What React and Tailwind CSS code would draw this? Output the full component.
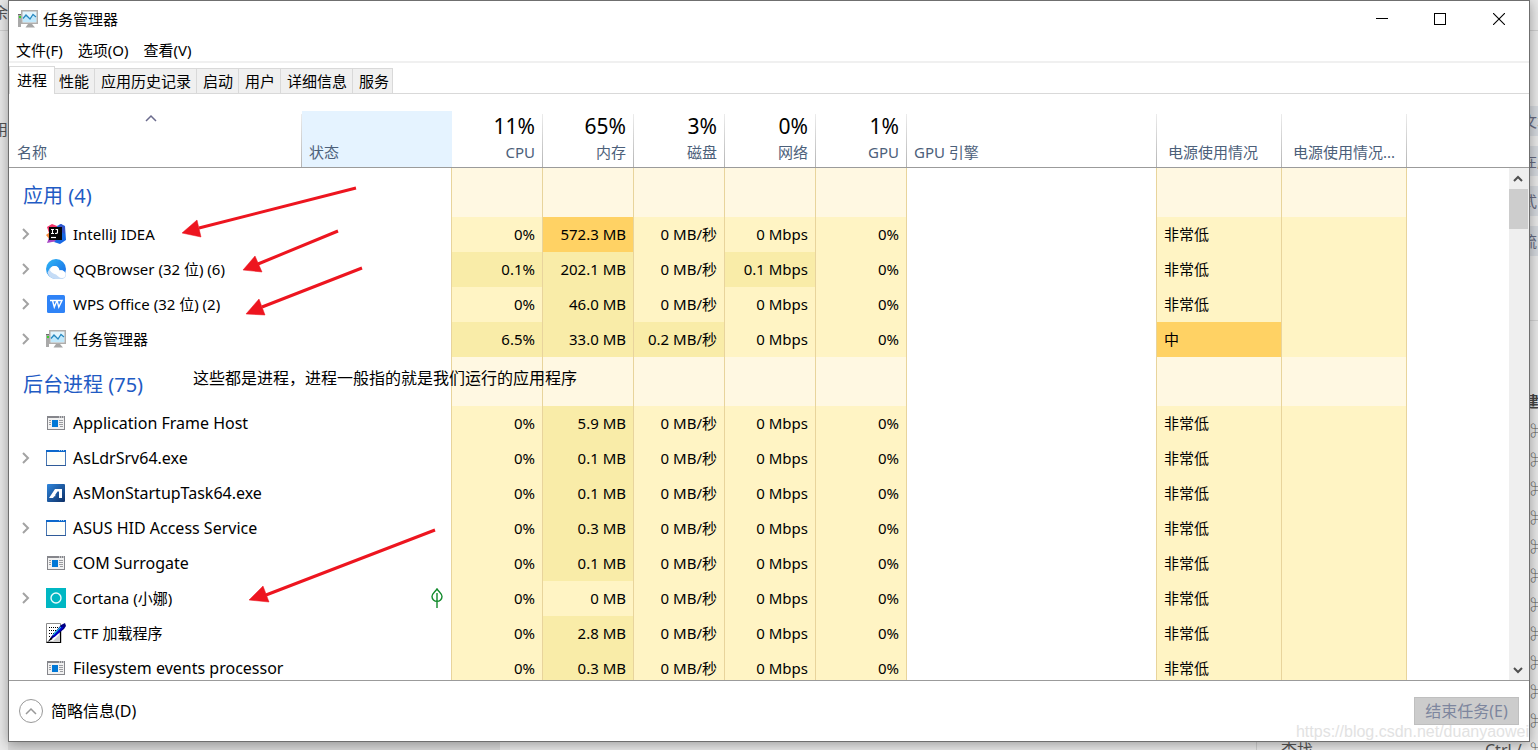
import { useState } from 'react';

const groups = [
  {
    title: '应用 (4)',
    rows: [
      { name: 'IntelliJ IDEA', icon: IdeaIcon, expand: true, cpu: '0%', mem: '572.3 MB', memLevel: 'high', disk: '0 MB/秒', net: '0 Mbps' },
      { name: 'QQBrowser (32 位) (6)', icon: BrowserIcon, expand: true, cpu: '0.1%', cpuLevel: 'mid', mem: '202.1 MB', disk: '0 MB/秒', net: '0.1 Mbps', netLevel: 'mid' },
      { name: 'WPS Office (32 位) (2)', icon: WpsIcon, expand: true, cpu: '0%', mem: '46.0 MB', disk: '0 MB/秒', net: '0 Mbps' },
      { name: '任务管理器', icon: TaskIcon, expand: true, cpu: '6.5%', cpuLevel: 'mid', mem: '33.0 MB', disk: '0.2 MB/秒', diskLevel: 'mid', net: '0 Mbps', power: '中', powerLevel: 'high' },
    ],
  },
  {
    title: '后台进程 (75)',
    large: true,
    rows: [
      { name: 'Application Frame Host', icon: HostIcon, cpu: '0%', mem: '5.9 MB', disk: '0 MB/秒', net: '0 Mbps' },
      { name: 'AsLdrSrv64.exe', icon: WindowIcon, expand: true, cpu: '0%', mem: '0.1 MB', disk: '0 MB/秒', net: '0 Mbps' },
      { name: 'AsMonStartupTask64.exe', icon: AsusIcon, cpu: '0%', mem: '0.1 MB', disk: '0 MB/秒', net: '0 Mbps' },
      { name: 'ASUS HID Access Service', icon: WindowIcon, expand: true, cpu: '0%', mem: '0.3 MB', disk: '0 MB/秒', net: '0 Mbps' },
      { name: 'COM Surrogate', icon: HostIcon, cpu: '0%', mem: '0.1 MB', disk: '0 MB/秒', net: '0 Mbps' },
      { name: 'Cortana (小娜)', icon: CortanaIcon, expand: true, leaf: true, cpu: '0%', mem: '0 MB', memLevel: 'low', disk: '0 MB/秒', net: '0 Mbps' },
      { name: 'CTF 加载程序', icon: CtfIcon, cpu: '0%', mem: '2.8 MB', disk: '0 MB/秒', net: '0 Mbps' },
      { name: 'Filesystem events processor', icon: HostIcon, cpu: '0%', mem: '0.3 MB', disk: '0 MB/秒', net: '0 Mbps' },
    ],
  },
];

const tabs = [
  { label: '性能', pad: 'pl-1 pr-[5px]' },
  { label: '应用历史记录', pad: 'pl-1.5 pr-[5px]' },
  { label: '启动', pad: 'pl-1.5 pr-[5px]' },
  { label: '用户', pad: 'pl-1.5 pr-[5px]' },
  { label: '详细信息', pad: 'pl-1.5 pr-[5px]' },
  { label: '服务', pad: 'pl-1.5 pr-[3px]' },
];

const usage = [
  { total: '11%', label: 'CPU' },
  { total: '65%', label: '内存' },
  { total: '3%', label: '磁盘' },
  { total: '0%', label: '网络' },
  { total: '1%', label: 'GPU' },
];

const heat = {
  low: 'bg-[#fff4c4]',
  mid: 'bg-[#f9eca8]',
  high: 'bg-[#ffd264]',
};

const shortcuts = Array.from({ length: 12 }, (_, i) => i);

function TaskIcon() {
  return (
    <svg width="20" height="20" viewBox="0 0 20 20" className="shrink-0">
      <rect x="0" y="5" width="3" height="13" fill="#a9a9a9" />
      <rect x="0" y="5" width="3" height="1" fill="#6d6d6d" />
      <rect x="1" y="7" width="2" height="2" fill="#39d02c" />
      <rect x="3.750" y="1.750" width="15.500" height="12.500" fill="#e3f5fd" stroke="#b0aeac" strokeWidth="1.500" />
      <path d="M5 13V9l3-2 4 3 3-3 3 2v4z" fill="#c0e8fb" />
      <path d="M5 9.500 8 6l4 4 3-4.500L18 8" fill="none" stroke="#2688c0" strokeWidth="1.300" />
      <path d="M10 15h4l3 3.500H7.500z" fill="#a6a6a6" />
    </svg>
  );
}

function IdeaIcon() {
  return (
    <svg width="20" height="20" viewBox="0 0 20 20" className="shrink-0">
      <path d="M1 3 6 0l5 2 2 4-7 9-3-6z" fill="#f2356b" />
      <path d="M0 11l4-3 4 7-4 1z" fill="#f58a3c" />
      <path d="M1 19l3-8 4 3 5 3-7 1z" fill="#a746c4" />
      <path d="M11 2l4-2 4 2 1 14-6 4-6-2 6-6z" fill="#1768e4" />
      <path d="M13 1l2-1 4 3v7l-5-3z" fill="#3452c8" />
      <rect x="3" y="3" width="13" height="13" fill="#050505" />
      <path d="M5 5.500h3M6.500 5v5M5 9.500h3M9.500 5.500H12M11.500 5v3.500q0 1-2.500 1" fill="none" stroke="#fff" strokeWidth="1.100" />
      <path d="M5 13.500h5" stroke="#fff" strokeWidth="1.200" />
    </svg>
  );
}

function BrowserIcon() {
  return (
    <svg width="20" height="20" viewBox="0 0 20 20" className="shrink-0">
      <defs>
        <linearGradient id="qq" x1="0" y1="0" x2="1" y2="1">
          <stop offset="0%" stopColor="#2fb8f5" />
          <stop offset="100%" stopColor="#1765e6" />
        </linearGradient>
      </defs>
      <circle cx="10" cy="10" r="10" fill="url(#qq)" />
      <path d="M1.500 13.500C3 11 4 7 8.500 7c3 0 4.500 2 5 4.500 3-1 6 1 6.500 4 0 2-1 4-3.500 4.500H9c-3.500 0-6.500-3-7.500-6.500z" fill="#c5dcf6" />
      <path d="M4 11.500C4 9 6 7 8.500 7c3 0 4.500 2 5 4.500 3-1 6 1 6 4 0 2.500-1.500 3.500-3.500 3.500-3 0-4-2-6-3.500-2-1-4-1-6-4z" fill="#fff" />
    </svg>
  );
}

function WpsIcon() {
  return (
    <svg width="20" height="20" viewBox="0 0 20 20" className="shrink-0">
      <rect x="1" y="1" width="18" height="18" rx="1.500" fill="#2f83f7" />
      <path d="M4 6.500h2.500L8.300 13l2.700-6.500h-4M11 6.500 12.800 13 16 6.500h-4.500" fill="none" stroke="#fff" strokeWidth="1.400" />
    </svg>
  );
}

function HostIcon() {
  return (
    <svg width="20" height="20" viewBox="0 0 20 20" className="shrink-0">
      <rect x="1.500" y="3.500" width="17" height="13" fill="#f1f1f1" stroke="#85868b" />
      <rect x="1" y="3" width="18" height="2" fill="#85868b" />
      <path d="M13 4h1M15 4h1M17 4h1" stroke="#fff" />
      <rect x="6" y="7" width="6" height="7" fill="#0078d7" />
      <path d="M3 7.500h2M3 9.500h2M3 11.500h2M13 7.500h4M13 9.500h4M13 11.500h4M14 13.500h3" stroke="#9b9ca0" />
    </svg>
  );
}

function WindowIcon() {
  return (
    <svg width="20" height="20" viewBox="0 0 20 20" className="shrink-0">
      <rect x=".5" y="2.500" width="19" height="15" fill="#fdfefa" stroke="#4777b5" />
      <rect x="0" y="2" width="20" height="2" fill="#0d68cc" />
      <path d="M13 2.500h1M15 2.500h1M17 2.500h1" stroke="#9cc7f3" />
      <path d="M0 17.500h20" stroke="#2e5a98" />
    </svg>
  );
}

function AsusIcon() {
  return (
    <svg width="20" height="20" viewBox="0 0 20 20" className="shrink-0">
      <defs>
        <linearGradient id="asus" x1="0" y1="0" x2="1" y2="1">
          <stop offset="0%" stopColor="#2f86dd" />
          <stop offset="100%" stopColor="#0d2f66" />
        </linearGradient>
      </defs>
      <rect x="1" y="1" width="18" height="18" rx="1" fill="url(#asus)" />
      <path d="M3 15 9 6h7v9h-3V8.500h-1.500L7 15z" fill="#fff" />
      <path d="M6.500 12.500h2.800" stroke="#fff" strokeWidth="1.500" />
    </svg>
  );
}

function CortanaIcon() {
  return (
    <svg width="20" height="20" viewBox="0 0 20 20" className="shrink-0">
      <rect width="20" height="20" fill="#00b7c3" />
      <circle cx="10" cy="10" r="5" fill="none" stroke="#e9fbfc" strokeWidth="1.400" />
    </svg>
  );
}

function CtfIcon() {
  return (
    <svg width="20" height="20" viewBox="0 0 20 20" className="shrink-0">
      <path d="M.5.5h14v19H.5z" fill="#fff" stroke="#8b8b8b" />
      <path d="M14.500 8v11.500H.5" fill="none" stroke="#000" strokeWidth="1.400" />
      <path d="M14 11v8H6z" fill="#d0d0d0" />
      <path d="M3 4.500h9M3 7.500h8M3 10.500h5M3 13.500h2" stroke="#000" strokeDasharray="1 1" />
      <path d="M3 18l2-4L15 2l4-2 1 3-2 3L7 15z" fill="#000080" />
      <path d="M7 12 15 4" stroke="#1fb6e8" strokeWidth="1.200" />
      <path d="M8 13.500 17 4" stroke="#0000d8" strokeWidth="1.500" />
      <path d="M1.500 19 5 14.500 6.500 16z" fill="#000" />
    </svg>
  );
}

function LeafIcon() {
  return (
    <svg width="12" height="20" viewBox="0 0 12 20" className="ml-auto">
      <path d="M6 1C4 4 1 5.500 1 8.500a5 4.800 0 0 0 10 0C11 5.500 8 4 6 1zM6 5v15" fill="none" stroke="#128a2c" strokeWidth="1.400" />
    </svg>
  );
}

function Chevron({ className, d, stroke = 2 }) {
  return (
    <svg width="12" height="12" viewBox="0 0 12 12" className={className}>
      <path d={d} fill="none" stroke="currentColor" strokeWidth={stroke} />
    </svg>
  );
}

const sep = 'bg-[linear-gradient(#ececec,#b4b4b4)] bg-[length:1px_53px] bg-right-bottom bg-no-repeat';
const line = 'border-r border-[#e8d49c]';

function Value({ level = 'low', children }) {
  return <td className={`${line} ${heat[level]} pr-[7px] text-right`}>{children}</td>;
}

function ProcessRow({ row, large }) {
  const Icon = row.icon;
  // latin-only names run a little larger than the mixed ones
  const latin = large && /^[\w .]+$/.test(row.name);
  return (
    <tr className="h-[35px] *:pb-0.5">
      <td className="pl-[11px]">
        <div className="flex items-center">
          <span className="w-[26px]">
            {row.expand && (
              <button aria-label={`展开 ${row.name}`} className="block text-[#a3a3a3]">
                <Chevron d="M3 1l5 5-5 5" />
              </button>
            )}
          </span>
          <Icon />
          <span className={latin ? 'ml-[7px] text-base leading-[22px]' : 'ml-[7px]'}>{row.name}</span>
        </div>
      </td>
      <td className={`${line} pr-2`}>{row.leaf && <LeafIcon />}</td>
      <Value level={row.cpuLevel}>{row.cpu}</Value>
      <Value level={row.memLevel || 'mid'}>{row.mem}</Value>
      <Value level={row.diskLevel}>{row.disk}</Value>
      <Value level={row.netLevel}>{row.net}</Value>
      <Value>0%</Value>
      <td className={line} />
      <td className={`${line} ${heat[row.powerLevel || 'low']} pl-[7px]`}>{row.power || '非常低'}</td>
      <td className={`${line} ${heat.low}`} />
      <td />
    </tr>
  );
}

function GroupRow({ title }) {
  const cell = `${line} bg-[#fff8e2]`;
  return (
    <tr className="h-[49px]">
      <th colSpan={2} className={`${line} pt-1.5 pl-3.5 text-left text-xl font-normal text-[#1f5bc4]`}>{title}</th>
      {usage.map((u) => <td key={u.label} className={cell} />)}
      <td className={line} />
      <td className={cell} />
      <td className={cell} />
      <td />
    </tr>
  );
}

function ProcessTable() {
  return (
    <table className="w-full table-fixed border-separate border-spacing-0 whitespace-nowrap">
      <colgroup>
        <col className="w-[293px]" />
        <col className="w-[150px]" />
        {usage.map((u) => <col key={u.label} className="w-[91px]" />)}
        <col className="w-[250px]" />
        <col className="w-[125px]" />
        <col className="w-[125px]" />
        <col />
      </colgroup>
      <thead className="text-[#4c607a]">
        <tr className="h-[57px] *:border-b *:border-[#9b9b9b] *:pb-1 *:align-bottom *:font-normal">
          <th className={`${sep} pl-2 text-left`}>
            <div className="mb-4 pr-[18px]">
              <Chevron d="M1 8l5-5 5 5" stroke={1.5} className="mx-auto text-[#6b6b8d]" />
            </div>
            名称
          </th>
          <th className="bg-[#e5f3ff] pl-[7px] text-left">状态</th>
          {usage.map((u) => (
            <th key={u.label} className={`${sep} pr-2 text-right`}>
              <span className="block text-[21px] leading-[30px] text-black">{u.total}</span>
              {u.label}
            </th>
          ))}
          <th className={`${sep} pl-[7px] text-left`}>GPU 引擎</th>
          <th className={`${sep} pl-[11px] text-left`}>电源使用情况</th>
          <th className={`${sep} pl-[11px] text-left`}>电源使用情况...</th>
          <th />
        </tr>
      </thead>
      <tbody>
        {groups.map((g) => [
          <GroupRow key={g.title} title={g.title} />,
          ...g.rows.map((row) => <ProcessRow key={row.name} row={row} large={g.large} />),
        ])}
      </tbody>
    </table>
  );
}

function ScrollBar() {
  return (
    <div className="flex w-5 shrink-0 flex-col">
      <div className="h-[57px] shrink-0 border-b border-[#9b9b9b]" />
      <div className="flex flex-1 flex-col bg-[#efefef] text-[#505050]">
        <button aria-label="向上滚动" className="flex h-[21px] items-center justify-center pr-0.5">
          <Chevron d="M2 8l4-4 4 4" />
        </button>
        <div className="mr-px h-10 bg-[#cdcdcd]" />
        <button aria-label="向下滚动" className="mt-auto flex h-[21px] items-center justify-center pr-0.5">
          <Chevron d="M2 4l4 4 4-4" />
        </button>
      </div>
    </div>
  );
}

/* 红色箭头和说明文字 */
function Notes() {
  return (
    <>
      <svg width="460" height="740" viewBox="9 1 460 740" className="pointer-events-none absolute top-0 left-0" fill="#ed151f" stroke="#ed151f">
        <path d="M356 188 199 228M338 231 258 264M362 268 262 307M435 530 266 595" strokeWidth="3" />
        <path d="M182 233l15-13 4 17zM243 270l12-14 7 16zM246 314l13-15 6 16zM249 600l14-14 6 16z" strokeWidth=".5" />
      </svg>
      <p className="pointer-events-none absolute top-[365px] left-[184px] text-base">
        这些都是进程，进程一般指的就是我们运行的应用程序
      </p>
    </>
  );
}

function TaskManager() {
  const [active, setActive] = useState('进程');
  return (
    <main className="relative z-10 flex min-h-0 flex-1 flex-col border border-[#6f6f6f] bg-white shadow-[0_2px_12px_rgba(0,0,0,0.35)]">
      <header className="flex h-9 shrink-0 items-center pl-[9px]">
        <TaskIcon />
        <h1 className="ml-[5px]">任务管理器</h1>
        <div className="ml-auto flex h-full pr-px">
          <button aria-label="最小化" className="flex w-[58px] items-center justify-center">
            <svg width="12" height="12"><path d="M0 5.500h12" stroke="#000" /></svg>
          </button>
          <button aria-label="最大化" className="flex w-[58px] items-center justify-center">
            <svg width="12" height="12"><rect x=".5" y=".5" width="11" height="11" fill="none" stroke="#000" /></svg>
          </button>
          <button aria-label="关闭" className="flex w-[59px] items-center justify-center">
            <svg width="12" height="12"><path d="M0 0l12 12M12 0 0 12" stroke="#000" strokeWidth="1.100" /></svg>
          </button>
        </div>
      </header>

      <nav className="flex h-[26px] shrink-0 items-center gap-[15px] border-b-2 border-[#f0f0f0] pt-0.5 pl-[7px]">
        <button>文件(F)</button>
        <button>选项(O)</button>
        <button>查看(V)</button>
      </nav>

      <div className="mt-[3px] flex h-7 shrink-0 items-stretch">
        <button onClick={() => setActive('进程')} className="w-[46px] border border-b-0 border-[#d9d9d9] bg-white pb-0.5" aria-pressed={active === '进程'}>
          进程
        </button>
        {tabs.map((t) => (
          <button key={t.label} onClick={() => setActive(t.label)} className={`mt-0.5 border-t border-r border-b border-[#d9d9d9] bg-[#f0f0f0] ${t.pad}`}>
            {t.label}
          </button>
        ))}
        <div className="flex-1 border-b border-[#d9d9d9]" />
      </div>

      <div className="mt-[17px] flex min-h-0 flex-1 overflow-hidden">
        <div className="min-w-0 flex-1">
          <ProcessTable />
        </div>
        <ScrollBar />
      </div>

      <footer className="flex h-[61px] shrink-0 items-center border-t border-[#9b9b9b] pr-2.5 pl-2.5 text-base">
        <button className="flex items-center gap-2">
          <span className="flex size-6 items-center justify-center rounded-full border border-[#999] text-[#999]">
            <Chevron d="M1 9l5-5 5 5" stroke={1.5} />
          </span>
          简略信息(D)
        </button>
        <button disabled className="ml-auto h-7 w-[105px] border border-[#bfbfbf] bg-[#cccccc] text-[#7d869e]">
          结束任务(E)
        </button>
      </footer>

      <Notes />
      <span className="pointer-events-none absolute right-0 bottom-0 font-['Liberation_Sans'] text-base leading-[18px] text-[#e2e2e2]">
        https://blog.csdn.net/duanyaowei
      </span>
    </main>
  );
}

export default function App() {
  return (
    <div className="flex h-screen overflow-hidden bg-[#e9e9e9] font-['Noto_Sans','Noto_Sans_CJK_SC',sans-serif] text-[15px] leading-[22px] text-black">
      <div className="flex w-2 shrink-0 flex-col items-end overflow-hidden text-[#555]">
        <span className="h-[31px] border-b border-[#d0d0d0] pt-px">余</span>
        <span className="mt-[87px]">用</span>
      </div>
      <div className="flex min-w-0 flex-1 flex-col">
        <TaskManager />
        <div className="flex h-2 shrink-0 overflow-hidden leading-5 text-[#555]">
          <div className="w-[492px] bg-[#d9d9d9]" />
          <div className="mr-6 flex-1 border-r border-[#cfcfcf]" />
          <span className="w-[204px] text-base leading-4">查找</span>
          <span className="w-[45px] text-base leading-4">Ctrl /</span>
        </div>
      </div>
      <div className="flex w-2 shrink-0 flex-col overflow-hidden whitespace-nowrap text-[#666a80]">
        <div className="h-[31px] shrink-0 border-b border-[#cfcfcf]" />
        <div className="mt-[75px] flex shrink-0 flex-col gap-2.5">
          {['文本', '在服', '式', '流'].map((c) => (
            <div key={c} className="flex h-[30px] items-center bg-[#d5d9de]">
              <span className="-ml-2">{c}</span>
            </div>
          ))}
        </div>
        <div className="mt-16 h-px shrink-0 bg-[#d2d2d2]" />
        <b className="mt-[69px] -ml-1.5 text-[#444]">建</b>
        <div className="mt-1 flex flex-col text-[#555]">
          {shortcuts.map((i) => <span key={i} className="h-[29px] shrink-0 leading-[29px]">⌘</span>)}
        </div>
      </div>
    </div>
  );
}
